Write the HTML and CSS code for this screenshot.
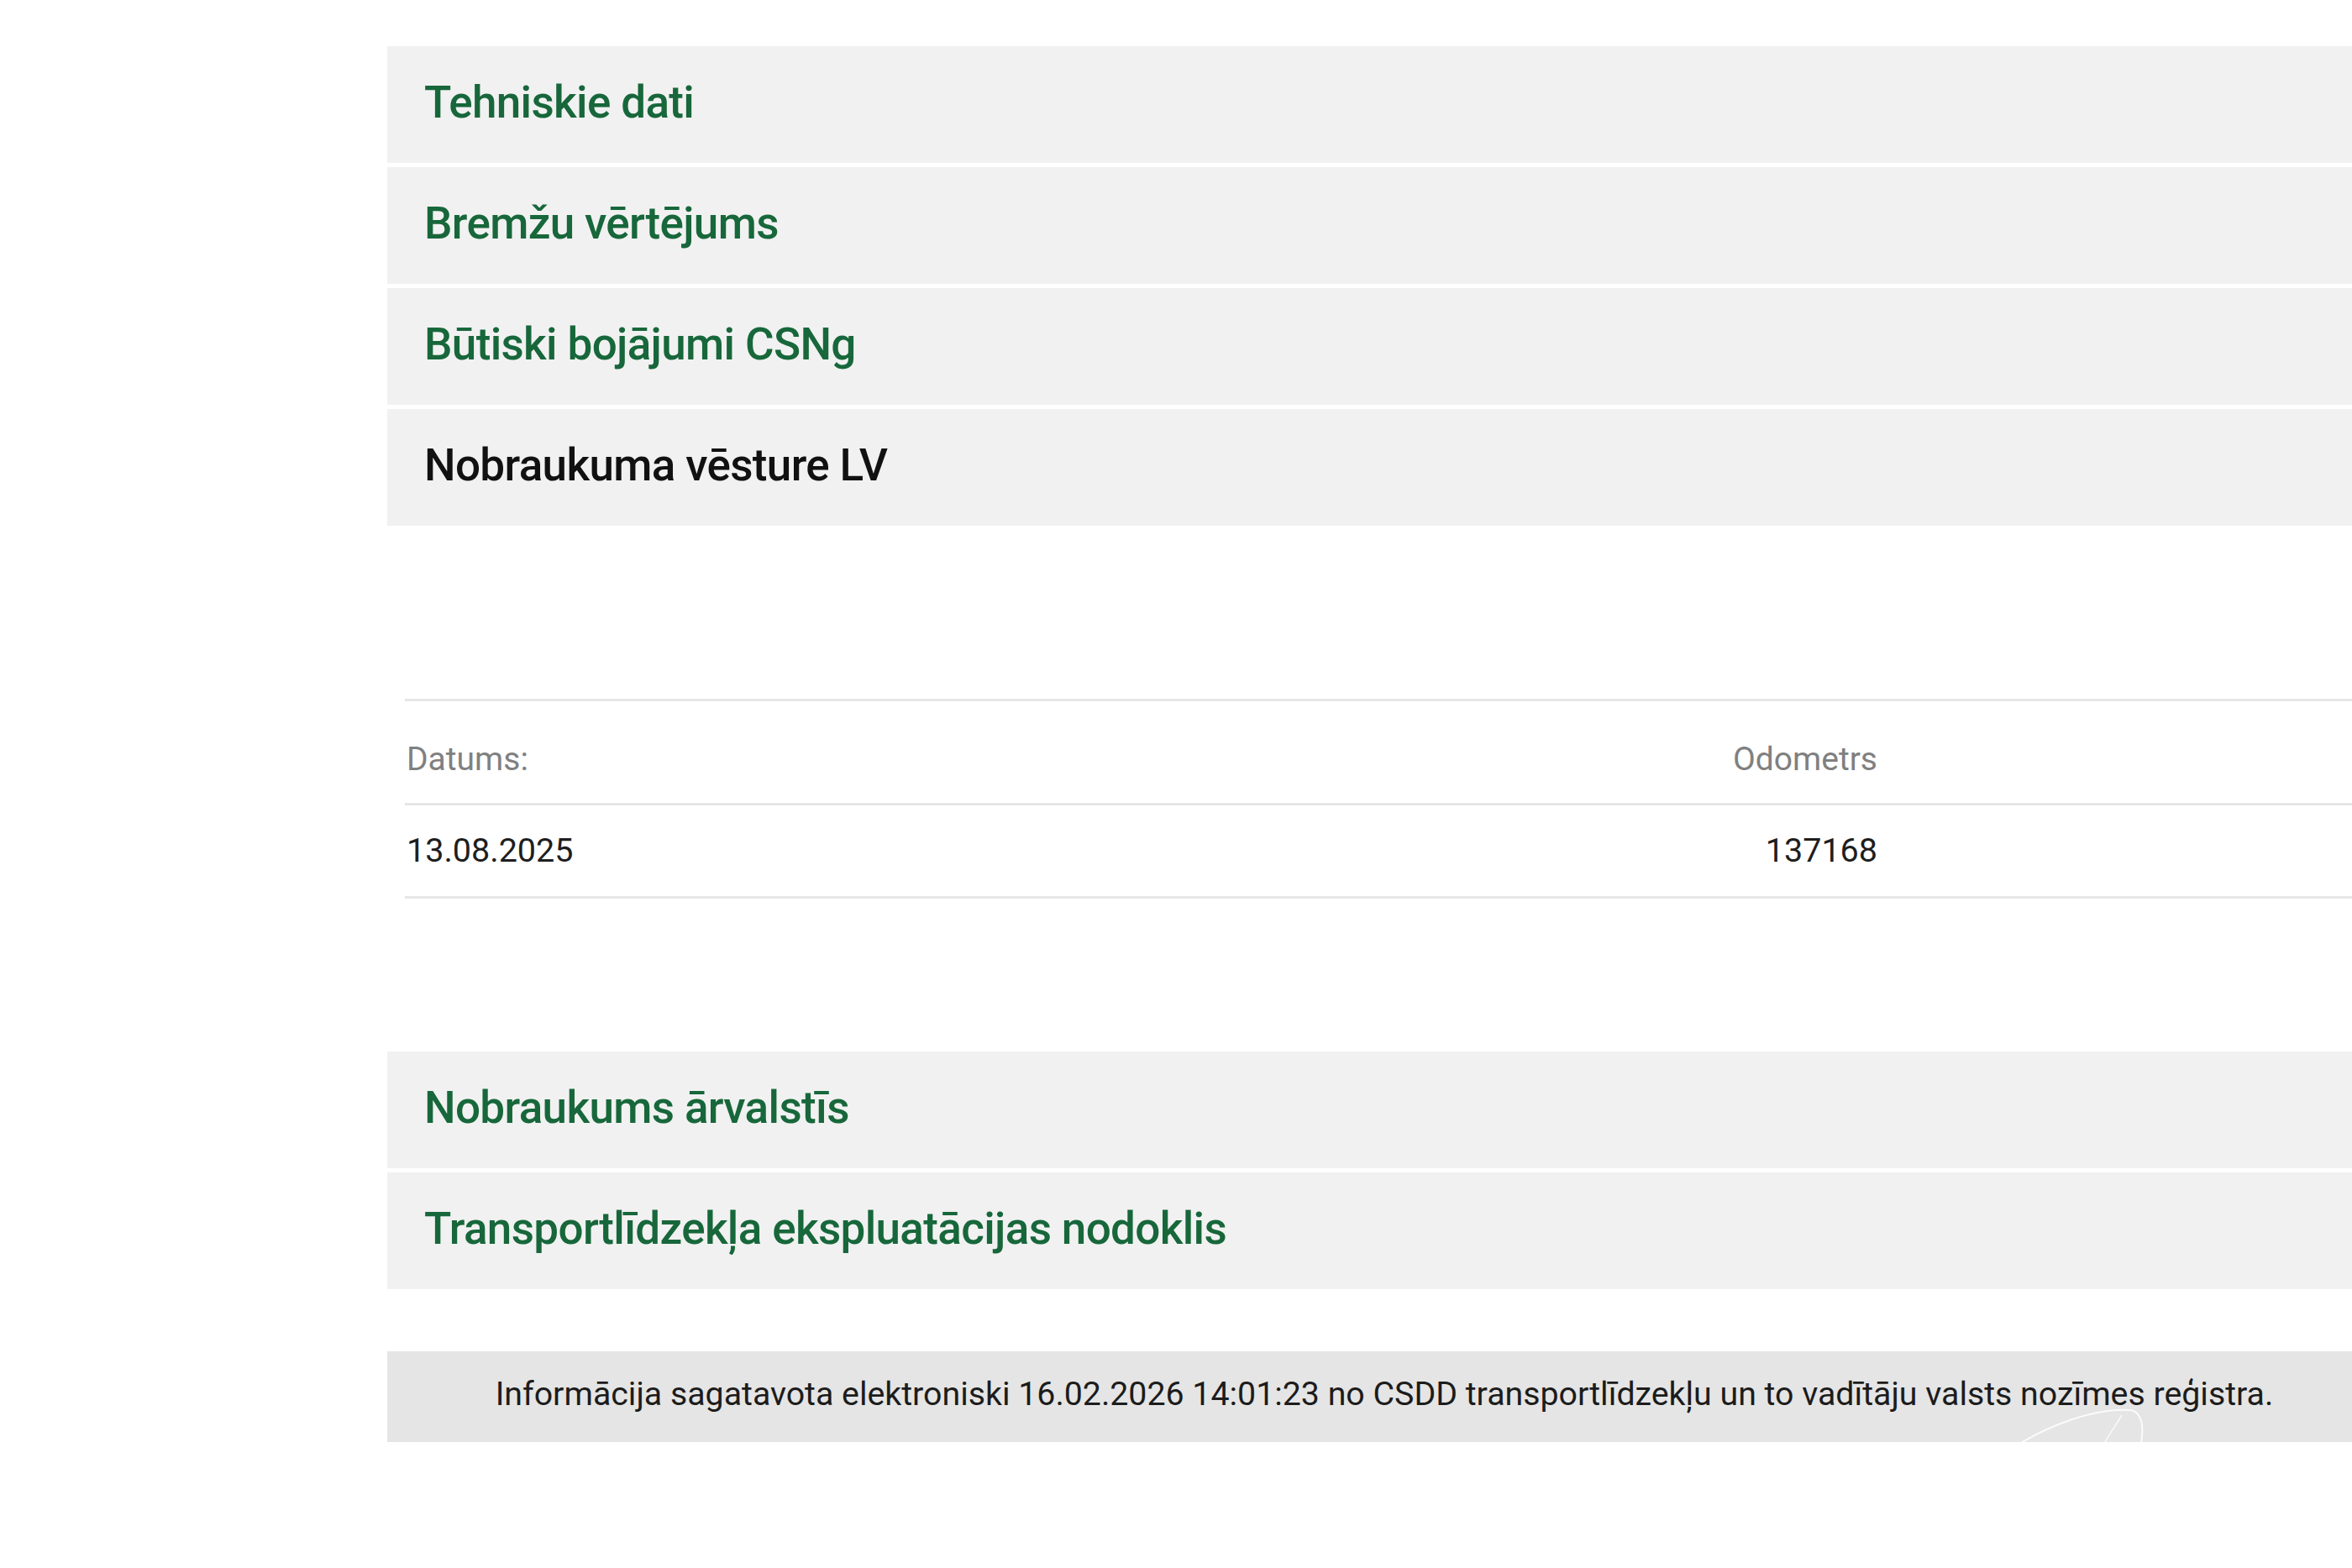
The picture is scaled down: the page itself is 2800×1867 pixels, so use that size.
FILE: index.html
```html
<!DOCTYPE html>
<html lang="lv">
<head>
<meta charset="utf-8">
<title>Nobraukuma vēsture</title>
<link rel="stylesheet" href="styles.css">
</head>
<body>
<div class="page">
  <div class="wrap">
    <div class="acc">
      <div class="acc-item">Tehniskie dati</div>
      <div class="acc-item">Bremžu vērtējums</div>
      <div class="acc-item">Būtiski bojājumi CSNg</div>
      <div class="acc-item active">Nobraukuma vēsture LV</div>
    </div>

    <div class="history">
      <div class="tbl">
        <div class="tr th">
          <div class="td">Datums:</div>
          <div class="td num">Odometrs</div>
          <div class="td"></div>
        </div>
        <div class="tr">
          <div class="td">13.08.2025</div>
          <div class="td num">137168</div>
          <div class="td"></div>
        </div>
      </div>
    </div>

    <div class="acc">
      <div class="acc-item">Nobraukums ārvalstīs</div>
      <div class="acc-item">Transportlīdzekļa ekspluatācijas nodoklis</div>
    </div>

    <div class="footer">
      <span class="footer-text">Informācija sagatavota elektroniski 16.02.2026 14:01:23 no CSDD transportlīdzekļu un to vadītāju valsts nozīmes reģistra.</span>
      <svg class="watermark" width="220" height="60" viewBox="0 0 220 60" aria-hidden="true">
        <path d="M10 60 C 60 25, 120 5, 160 8 C 175 10, 178 30, 170 60" fill="none" stroke="#ffffff" stroke-width="2" opacity="0.85"/>
        <path d="M150 14 C 140 30, 130 45, 122 60" fill="none" stroke="#ffffff" stroke-width="1.5" opacity="0.8"/>
      </svg>
    </div>
  </div>
</div>
</body>
</html>
```
FILE: styles.css
```css
html, body {
  margin: 0;
  padding: 0;
  background: #ffffff;
}

body {
  overflow: hidden;
  font-family: Roboto, "Liberation Sans", Arial, sans-serif;
}

.page {
  padding: 55px 0 0 461px;
}

.wrap {
  width: 2374px;
}

.acc {
  display: flex;
  flex-direction: column;
  gap: 5px;
}

.acc-item {
  height: 139px;
  box-sizing: border-box;
  padding: 0 0 5px 44px;
  background: #f1f1f1;
  color: #17673b;
  font-weight: 500;
  font-size: 53px;
  letter-spacing: -0.65px;
  line-height: 134px;
  white-space: nowrap;
}

.acc-item.active {
  color: #111111;
}

.history {
  padding: 206px 0 182px 21px;
}

.tbl {
  border-top: 3px solid #e6e6e6;
}

.tr {
  display: grid;
  grid-template-columns: 1200px 555px 1fr;
  border-bottom: 3px solid #e6e6e6;
  padding: 32px 0;
  font-size: 39.5px;
  line-height: 44px;
  color: #1e1e1e;
}

.tr.th {
  padding: 48px 0 31px;
  font-size: 39px;
  line-height: 42px;
  color: #808080;
}

.td {
  padding: 0 2px;
  white-space: nowrap;
}

.td.num {
  text-align: right;
}

.footer {
  position: relative;
  margin-top: 74px;
  height: 108px;
  box-sizing: border-box;
  padding-bottom: 5px;
  background: #e5e5e5;
  text-align: center;
  font-size: 39.3px;
  line-height: 103px;
  color: #1c1c1c;
  white-space: nowrap;
  overflow: hidden;
}

.watermark {
  position: absolute;
  left: 1915px;
  top: 62px;
}
```
